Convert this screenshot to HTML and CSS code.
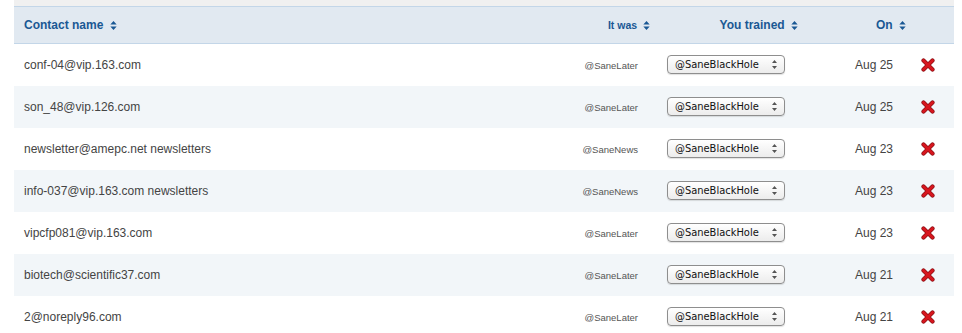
FILE: index.html
```html
<!DOCTYPE html>
<html lang="en">
<head>
    <meta charset="UTF-8">
    <title>Trained contacts</title>
    <link rel="stylesheet" href="styles.css">
</head>
<body>
    <div class="panel">
        <div class="panel-top"></div>
        <table class="trained">
            <colgroup>
                <col class="w-name">
                <col class="w-was">
                <col class="w-trained">
                <col class="w-on">
                <col class="w-del">
            </colgroup>
            <thead>
                <tr>
                    <th class="col-name">Contact name <svg class="sort" viewBox="0 0 7 10"><path d="M3.5 0L7 4H0z M3.5 10L0 6H7z"/></svg></th>
                    <th class="col-was small">It was <svg class="sort" viewBox="0 0 7 10"><path d="M3.5 0L7 4H0z M3.5 10L0 6H7z"/></svg></th>
                    <th class="col-trained">You trained <svg class="sort" viewBox="0 0 7 10"><path d="M3.5 0L7 4H0z M3.5 10L0 6H7z"/></svg></th>
                    <th class="col-on">On <svg class="sort" viewBox="0 0 7 10"><path d="M3.5 0L7 4H0z M3.5 10L0 6H7z"/></svg></th>
                    <th class="col-del"></th>
                </tr>
            </thead>
            <tbody id="rows"></tbody>
        </table>
    </div>

    <script>
        // Rows of trained contacts
        const rows = [
            ["conf-04@vip.163.com", "@SaneLater", "Aug 25"],
            ["son_48@vip.126.com", "@SaneLater", "Aug 25"],
            ["newsletter@amepc.net newsletters", "@SaneNews", "Aug 23"],
            ["info-037@vip.163.com newsletters", "@SaneNews", "Aug 23"],
            ["vipcfp081@vip.163.com", "@SaneLater", "Aug 23"],
            ["biotech@scientific37.com", "@SaneLater", "Aug 21"],
            ["2@noreply96.com", "@SaneLater", "Aug 21"]
        ];

        const tbody = document.getElementById('rows');
        rows.forEach(([name, was, on]) => {
            const tr = document.createElement('tr');
            tr.innerHTML = `
                <td class="col-name">${name}</td>
                <td class="col-was"><span class="was">${was}</span></td>
                <td class="col-trained">
                    <span class="picker">@SaneBlackHole
                        <svg class="picker-arrows" viewBox="0 0 5 9"><path d="M2.5 0L5 3H0z M2.5 9L0 6H5z"/></svg>
                    </span>
                </td>
                <td class="col-on">${on}</td>
                <td class="col-del">
                    <svg class="del" viewBox="0 0 14 14">
                        <path class="del-shade" d="M2.5 2.5L11.5 11.5 M11.5 2.5L2.5 11.5" />
                        <path class="del-face" d="M2.5 2.5L11.5 11.5 M11.5 2.5L2.5 11.5" />
                    </svg>
                </td>`;
            tbody.appendChild(tr);
        });
    </script>
</body>
</html>
```

FILE: styles.css
```css
body {
    margin: 0;
    padding: 0 8px 0 14px;
    background-color: white;
    font-family: 'Liberation Sans', Arial, sans-serif;
    color: #444;
}
.panel {
    width: 940px;
}
.panel-top {
    height: 6px;
    background-color: #f0f0f0;
}
.trained {
    width: 940px;
    border-collapse: collapse;
    table-layout: fixed;
}
.w-name { width: 556px; }
.w-was { width: 85px; }
.w-trained { width: 165px; }
.w-on { width: 90px; }
.w-del { width: 44px; }
.trained th,
.trained td {
    box-sizing: border-box;
    padding: 0;
    white-space: nowrap;
}
.trained th {
    height: 37px;
    background-color: #e1e9f1;
    border-top: 1px solid #c3d6e8;
    border-bottom: 1px solid #c3d6e8;
    color: #1a5894;
    font-size: 12px;
    font-weight: bold;
}
.trained th.small {
    font-size: 10.5px;
}
.sort {
    width: 7px;
    height: 9px;
    margin-left: 3px;
    vertical-align: -1px;
    fill: #1a5894;
}
.trained td {
    height: 42px;
    font-size: 12px;
}
.trained tbody tr:nth-child(even) td {
    background-color: #f2f6f9;
}
.trained .col-name {
    text-align: left;
    padding-left: 10px;
}
.trained .col-was {
    text-align: right;
}
.trained th.col-was {
    padding-right: 5px;
}
.trained td.col-was {
    padding-right: 17px;
}
.was {
    font-size: 9.5px;
    color: #555;
}
.trained th.col-trained {
    text-align: right;
    padding-right: 22px;
}
.trained td.col-trained {
    padding-left: 12px;
}
.picker {
    display: inline-flex;
    align-items: center;
    justify-content: space-between;
    box-sizing: border-box;
    width: 118px;
    height: 19px;
    padding: 0 7px 0 7px;
    border: 1px solid #8e8e8e;
    border-radius: 4px;
    background: linear-gradient(#ffffff, #ececec);
    box-shadow: 0 1px 1px rgba(0, 0, 0, 0.12);
    font-family: 'DejaVu Sans Condensed', 'DejaVu Sans', sans-serif;
    font-size: 11px;
    color: #111;
    vertical-align: middle;
}
.picker-arrows {
    width: 5px;
    height: 9px;
    fill: #555;
}
.trained .col-on {
    text-align: right;
}
.trained th.col-on {
    padding-right: 4px;
}
.trained td.col-on {
    padding-right: 17px;
}
.trained td.col-del {
    padding-left: 11px;
}
.del {
    width: 14px;
    height: 14px;
    display: block;
    fill: none;
    stroke-linecap: round;
}
.del-shade {
    stroke: #8a0f14;
    stroke-width: 4.2;
}
.del-face {
    stroke: #d8161e;
    stroke-width: 2.8;
}
```
